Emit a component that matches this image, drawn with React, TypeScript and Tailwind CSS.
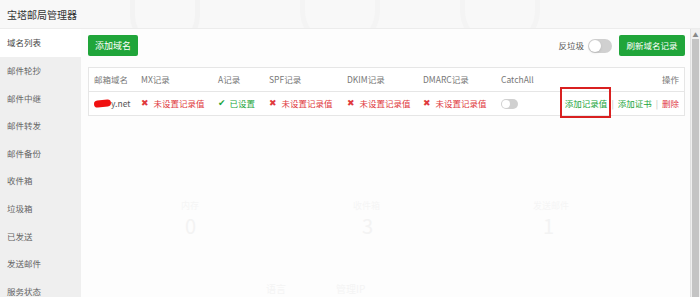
export default function App() {
  const menu = ["域名列表", "邮件轮抄", "邮件中继", "邮件转发", "邮件备份", "收件箱", "垃圾箱", "已发送", "发送邮件", "服务状态"];
  const cjk = { fontFamily: '"Noto Sans CJK SC", "Liberation Sans", sans-serif' };

  const Bad = () => (
    <span className="flex items-center gap-[5px] text-[#e0393e]">
      <span className="text-[9px] font-bold" style={{ fontFamily: '"DejaVu Sans", sans-serif' }}>✖</span>
      未设置记录值
    </span>
  );

  return (
    <div className="w-[700px] h-[297px] flex flex-col overflow-hidden bg-white text-[8.5px] text-[#666]" style={cjk}>
      {/* Header */}
      <div className="relative h-[29px] shrink-0 flex items-center px-[7px] bg-[#f8f8f8] border-b border-[#ececec] overflow-hidden">
        <div className="absolute left-[130px] top-[-60px] w-[70px] h-[110px] rounded-full border-[5px] border-[#f3f3f3]" />
        <div className="absolute left-[300px] top-[-40px] w-[80px] h-[90px] rounded-full border-[5px] border-[#f4f4f4]" />
        <div className="absolute left-[460px] top-[-40px] w-[80px] h-[90px] rounded-full border-[5px] border-[#f4f4f4]" />
        <span className="relative text-[10px] text-[#333]">宝塔邮局管理器</span>
      </div>

      <div className="flex flex-1 min-h-0">
        {/* Sidebar */}
        <div className="w-[81px] shrink-0 bg-[#efefef]">
          {menu.map((m, i) => (
            <div
              key={m}
              className={`h-[27.6px] flex items-center px-[7px] ${i === 0 ? "bg-white text-[#444]" : "text-[#666]"}`}
            >
              {m}
            </div>
          ))}
        </div>

        {/* Main */}
        <div className="relative flex-1 bg-[#fdfdfd] pl-[7px] pr-[5px] pt-[6px]">
          {/* faint background stats */}
          <div className="absolute left-[100px] top-[170px] text-[#f5f5f5] text-[9px]">内存</div>
          <div className="absolute left-[104px] top-[182px] text-[#f3f3f3] text-[20px]">0</div>
          <div className="absolute left-[272px] top-[170px] text-[#f5f5f5] text-[9px]">收件箱</div>
          <div className="absolute left-[281px] top-[182px] text-[#f3f3f3] text-[20px]">3</div>
          <div className="absolute left-[452px] top-[170px] text-[#f5f5f5] text-[9px]">发送邮件</div>
          <div className="absolute left-[462px] top-[182px] text-[#f3f3f3] text-[20px]">1</div>
          <div className="absolute left-[185px] top-[252px] text-[#f4f4f4] text-[10px]">语言</div>
          <div className="absolute left-[255px] top-[252px] text-[#f4f4f4] text-[10px]">管理IP</div>

          {/* toolbar */}
          <div className="relative flex items-center justify-between h-[21px]">
            <button className="h-[21px] w-[50px] bg-[#20a53a] text-white rounded-[2px] text-[9px]">添加域名</button>
            <div className="flex items-center gap-[4px]">
              <span className="text-[#555]">反垃圾</span>
              <span className="relative w-[24px] h-[14px] rounded-full bg-[#d0d0d0]">
                <span className="absolute left-[1px] top-[1px] w-[12px] h-[12px] rounded-full bg-white shadow-sm" />
              </span>
              <button className="ml-[3px] h-[21px] w-[66px] bg-[#20a53a] text-white rounded-[2px] text-[8.5px]">刷新域名记录</button>
            </div>
          </div>

          {/* table */}
          <div className="relative mt-[11px] border border-[#e6e6e6] bg-white">
            <div className="grid grid-cols-[47px_77px_51px_78px_76px_78px_1fr_auto] items-center h-[24px] pl-[5px] pr-[5px] border-b border-[#e6e6e6] text-[#777]">
              <span>邮箱域名</span>
              <span>MX记录</span>
              <span>A记录</span>
              <span>SPF记录</span>
              <span>DKIM记录</span>
              <span>DMARC记录</span>
              <span>CatchAll</span>
              <span className="text-right">操作</span>
            </div>
            <div className="grid grid-cols-[47px_77px_51px_78px_76px_78px_1fr_auto] items-center h-[23px] pl-[5px] pr-[5px]">
              <span className="flex items-center text-[#555]">
                <span className="w-[17px] h-[7px] rounded-full bg-[#f01010] -rotate-6" />
                y.net
              </span>
              <Bad />
              <span className="flex items-center gap-[4px] text-[#20a53a]">
                <span className="text-[9px] font-bold" style={{ fontFamily: '"DejaVu Sans", sans-serif' }}>✔</span>
                已设置
              </span>
              <Bad />
              <Bad />
              <Bad />
              <span>
                <span className="relative block w-[17px] h-[10px] rounded-full bg-[#d0d0d0]">
                  <span className="absolute left-[1px] top-[1px] w-[8px] h-[8px] rounded-full bg-white" />
                </span>
              </span>
              <span className="flex items-center gap-[4px] text-[#20a53a]">
                <span>添加记录值</span>
                <span className="text-[#bbb]">|</span>
                <span>添加证书</span>
                <span className="text-[#bbb]">|</span>
                <span className="text-[#e0393e]">删除</span>
              </span>
            </div>
            <div className="absolute left-[471px] top-[19px] w-[51px] h-[31px] border-2 border-[#d92020]" />
          </div>
        </div>

        {/* scrollbar */}
        <div className="w-[10px] shrink-0 flex flex-col bg-[#f0f0f0] border-l border-[#e0e0e0]">
          <div className="h-[10px] flex items-center justify-center text-[6px] text-[#888]">▲</div>
          <div className="flex-1 mx-[1px] bg-[#c4c4c4]" />
        </div>
      </div>
    </div>
  );
}
